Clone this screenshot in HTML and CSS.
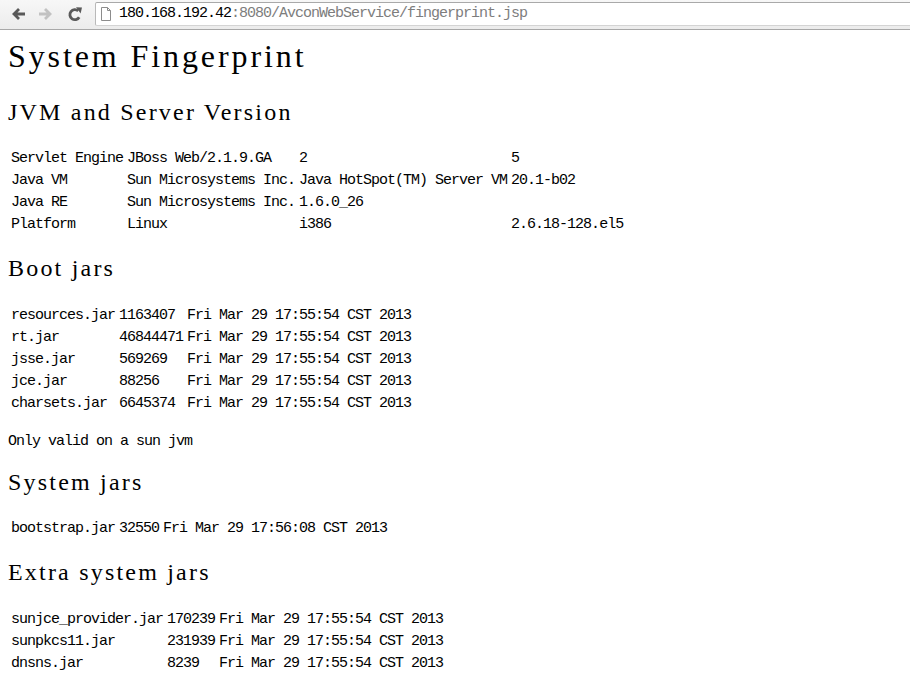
FILE: index.html
```html
<!DOCTYPE html>
<html>
<head>
<meta charset="utf-8">
<title>System Fingerprint</title>
<link rel="stylesheet" href="styles.css">
</head>
<body>
<div class="toolbar">
  <div class="nav">
    <svg class="icon back" width="16" height="16" viewBox="0 0 16 16"><path d="M15 8H4M9 3L4 8L9 13" fill="none" stroke="#595959" stroke-width="2.8"/></svg>
    <svg class="icon fwd" width="16" height="16" viewBox="0 0 16 16"><path d="M1 8H12M7 3L12 8L7 13" fill="none" stroke="#c2c2c2" stroke-width="2.8"/></svg>
    <svg class="icon reload" width="16" height="16" viewBox="0 0 16 16"><path d="M11.2 4.9A5 5 0 1 0 12.2 11.2" fill="none" stroke="#595959" stroke-width="2.8"/><path d="M9 1.2L15 1.6L13.6 7.4Z" fill="#595959"/></svg>
  </div>
  <div class="omnibox">
    <svg class="page-icon" width="12" height="16" viewBox="0 0 12 16"><path d="M1.5 1.5H7.5L10.5 4.5V14.5H1.5Z" fill="#fff" stroke="#8c8c8c"/><path d="M7.5 1.5V4.5H10.5" fill="none" stroke="#8c8c8c"/></svg>
    <span class="host">180.168.192.42</span><span class="path">:8080/AvconWebService/fingerprint.jsp</span>
  </div>
</div>
<main class="page">
  <h1>System Fingerprint</h1>
  <h2>JVM and Server Version</h2>
  <table class="info">
    <tr><td>Servlet Engine</td><td>JBoss Web/2.1.9.GA</td><td>2</td><td>5</td></tr>
    <tr><td>Java VM</td><td>Sun Microsystems Inc.</td><td>Java HotSpot(TM) Server VM</td><td>20.1-b02</td></tr>
    <tr><td>Java RE</td><td>Sun Microsystems Inc.</td><td>1.6.0_26</td><td></td></tr>
    <tr><td>Platform</td><td>Linux</td><td>i386</td><td>2.6.18-128.el5</td></tr>
  </table>
  <h2>Boot jars</h2>
  <table class="info">
    <tr><td>resources.jar</td><td>1163407</td><td>Fri Mar 29 17:55:54 CST 2013</td></tr>
    <tr><td>rt.jar</td><td>46844471</td><td>Fri Mar 29 17:55:54 CST 2013</td></tr>
    <tr><td>jsse.jar</td><td>569269</td><td>Fri Mar 29 17:55:54 CST 2013</td></tr>
    <tr><td>jce.jar</td><td>88256</td><td>Fri Mar 29 17:55:54 CST 2013</td></tr>
    <tr><td>charsets.jar</td><td>6645374</td><td>Fri Mar 29 17:55:54 CST 2013</td></tr>
  </table>
  <p class="note">Only valid on a sun jvm</p>
  <h2>System jars</h2>
  <table class="info">
    <tr><td>bootstrap.jar</td><td>32550</td><td>Fri Mar 29 17:56:08 CST 2013</td></tr>
  </table>
  <h2>Extra system jars</h2>
  <table class="info">
    <tr><td>sunjce_provider.jar</td><td>170239</td><td>Fri Mar 29 17:55:54 CST 2013</td></tr>
    <tr><td>sunpkcs11.jar</td><td>231939</td><td>Fri Mar 29 17:55:54 CST 2013</td></tr>
    <tr><td>dnsns.jar</td><td>8239</td><td>Fri Mar 29 17:55:54 CST 2013</td></tr>
  </table>
</main>
</body>
</html>
```

FILE: styles.css
```css
html, body {
  margin: 0;
  padding: 0;
  background: #fff;
}
body {
  font-family: "Liberation Mono", "DejaVu Sans Mono", monospace;
  font-size: 15px;
  letter-spacing: -1px;
  line-height: 18px;
  color: #000;
  overflow: hidden;
}
.toolbar {
  height: 29px;
  border-bottom: 1px solid #a8a8a8;
  background: linear-gradient(#f7f7f7, #ececec);
  display: flex;
  align-items: flex-start;
}
.nav {
  display: flex;
  align-items: center;
  padding-left: 10px;
  height: 28px;
}
.icon {
  display: block;
  flex: none;
}
.fwd { margin-left: 12px; }
.reload { margin-left: 13px; }
.omnibox {
  flex: 1;
  margin-left: 12px;
  margin-top: 2px;
  margin-right: -6px;
  height: 22px;
  background: #fff;
  border: 1px solid #b9b9b9;
  border-top-color: #a9a9a9;
  border-bottom-color: #d4d4d4;
  border-radius: 2px 0 0 2px;
  display: flex;
  align-items: center;
  padding-left: 4px;
  white-space: nowrap;
}
.page-icon {
  display: block;
  flex: none;
  margin-right: 7px;
}
.host { color: #000; }
.path { color: #7d7d7d; }
.page {
  padding: 0 8px;
}
h1 {
  font-family: "Liberation Serif", "DejaVu Serif", serif;
  font-size: 32px;
  letter-spacing: 2.9px;
  line-height: 36px;
  font-weight: normal;
  margin: 8.2px 0 24.7px;
}
h2 {
  font-family: "Liberation Serif", "DejaVu Serif", serif;
  font-size: 24px;
  letter-spacing: 2.2px;
  line-height: 27px;
  font-weight: normal;
  margin: 18px 0 21.5px;
}
.info {
  border-collapse: separate;
  border-spacing: 2px;
  margin: 0;
}
.info td {
  padding: 1px;
  white-space: nowrap;
  text-align: left;
  vertical-align: middle;
  line-height: 18px;
}
.note {
  margin: 16.75px 0 0;
}
```
